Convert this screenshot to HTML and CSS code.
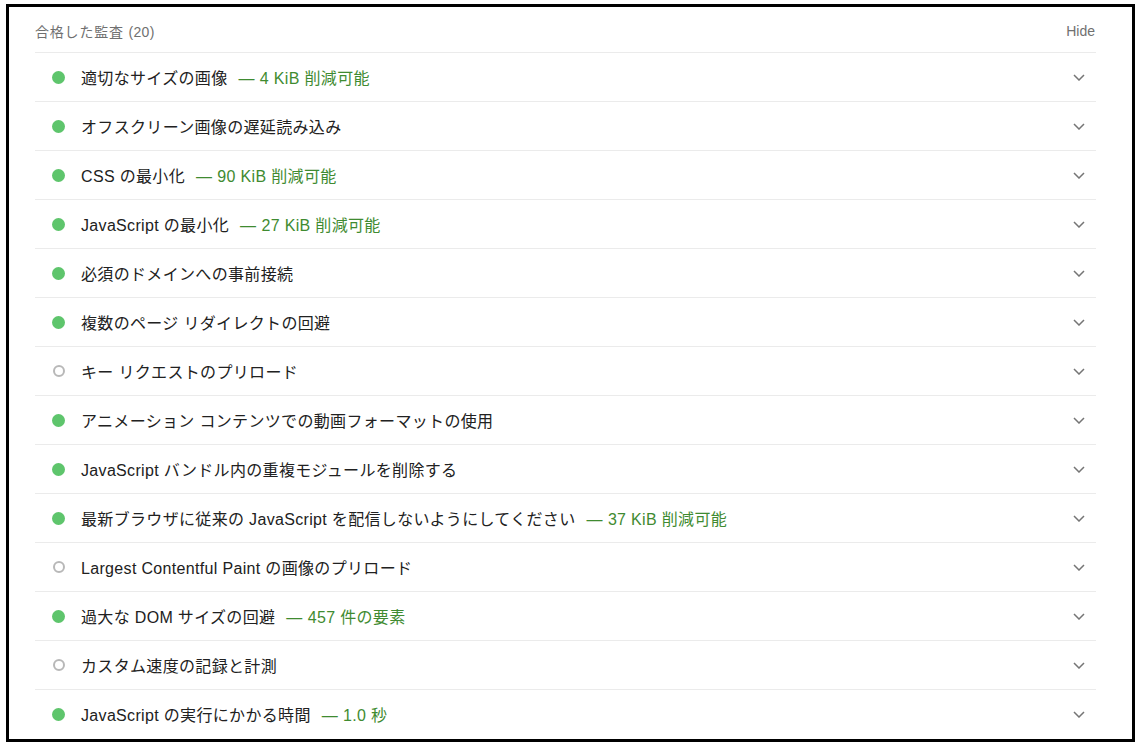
FILE: index.html
```html
<!DOCTYPE html>
<html lang="ja">
<head>
<meta charset="utf-8">
<title>合格した監査</title>
<link rel="stylesheet" href="styles.css">
</head>
<body>
<div class="frame">
  <div class="panel">
    <div class="group-head">
      <span class="group-title">合格した監査 <span class="count">(20)</span></span>
      <span class="hide">Hide</span>
    </div>
    <div class="row"><span class="dot pass"></span><span class="title">適切なサイズの画像</span><span class="value"><span class="dash">—</span>4 KiB 削減可能</span><svg class="chev" viewBox="0 0 12 7"><polyline points="1,1 6,6 11,1"/></svg></div>
    <div class="row"><span class="dot pass"></span><span class="title">オフスクリーン画像の遅延読み込み</span><svg class="chev" viewBox="0 0 12 7"><polyline points="1,1 6,6 11,1"/></svg></div>
    <div class="row"><span class="dot pass"></span><span class="title">CSS の最小化</span><span class="value"><span class="dash">—</span>90 KiB 削減可能</span><svg class="chev" viewBox="0 0 12 7"><polyline points="1,1 6,6 11,1"/></svg></div>
    <div class="row"><span class="dot pass"></span><span class="title">JavaScript の最小化</span><span class="value"><span class="dash">—</span>27 KiB 削減可能</span><svg class="chev" viewBox="0 0 12 7"><polyline points="1,1 6,6 11,1"/></svg></div>
    <div class="row"><span class="dot pass"></span><span class="title">必須のドメインへの事前接続</span><svg class="chev" viewBox="0 0 12 7"><polyline points="1,1 6,6 11,1"/></svg></div>
    <div class="row"><span class="dot pass"></span><span class="title">複数のページ リダイレクトの回避</span><svg class="chev" viewBox="0 0 12 7"><polyline points="1,1 6,6 11,1"/></svg></div>
    <div class="row"><span class="dot na"></span><span class="title">キー リクエストのプリロード</span><svg class="chev" viewBox="0 0 12 7"><polyline points="1,1 6,6 11,1"/></svg></div>
    <div class="row"><span class="dot pass"></span><span class="title">アニメーション コンテンツでの動画フォーマットの使用</span><svg class="chev" viewBox="0 0 12 7"><polyline points="1,1 6,6 11,1"/></svg></div>
    <div class="row"><span class="dot pass"></span><span class="title">JavaScript バンドル内の重複モジュールを削除する</span><svg class="chev" viewBox="0 0 12 7"><polyline points="1,1 6,6 11,1"/></svg></div>
    <div class="row"><span class="dot pass"></span><span class="title">最新ブラウザに従来の JavaScript を配信しないようにしてください</span><span class="value"><span class="dash">—</span>37 KiB 削減可能</span><svg class="chev" viewBox="0 0 12 7"><polyline points="1,1 6,6 11,1"/></svg></div>
    <div class="row"><span class="dot na"></span><span class="title">Largest Contentful Paint の画像のプリロード</span><svg class="chev" viewBox="0 0 12 7"><polyline points="1,1 6,6 11,1"/></svg></div>
    <div class="row"><span class="dot pass"></span><span class="title">過大な DOM サイズの回避</span><span class="value"><span class="dash">—</span>457 件の要素</span><svg class="chev" viewBox="0 0 12 7"><polyline points="1,1 6,6 11,1"/></svg></div>
    <div class="row"><span class="dot na"></span><span class="title">カスタム速度の記録と計測</span><svg class="chev" viewBox="0 0 12 7"><polyline points="1,1 6,6 11,1"/></svg></div>
    <div class="row"><span class="dot pass"></span><span class="title">JavaScript の実行にかかる時間</span><span class="value"><span class="dash">—</span>1.0 秒</span><svg class="chev" viewBox="0 0 12 7"><polyline points="1,1 6,6 11,1"/></svg></div>
  </div>
</div>
</body>
</html>
```

FILE: styles.css
```css
html, body {
  margin: 0;
  padding: 0;
  background: #ffffff;
}

body {
  font-family: "Liberation Sans", "Noto Sans CJK JP", sans-serif;
  color: #212121;
}

.frame {
  box-sizing: border-box;
  margin: 4px 0 0 6px;
  width: 1129px;
  height: 738px;
  border: 3px solid #000000;
  overflow: hidden;
  background: #ffffff;
}

.panel {
  padding: 0 36px 0 26px;
}

.group-head {
  box-sizing: border-box;
  height: 45px;
  padding-top: 3px;
  display: flex;
  align-items: center;
  justify-content: space-between;
  font-size: 14px;
  color: #707070;
}

.group-title {
  letter-spacing: 0.8px;
}

.count {
  letter-spacing: 0.3px;
}

.hide {
  color: #707070;
  padding-right: 1px;
}

.row {
  box-sizing: border-box;
  height: 49px;
  border-top: 1px solid #ebebeb;
  display: flex;
  align-items: center;
  font-size: 16px;
  letter-spacing: 0.33px;
  padding-left: 17px;
  padding-right: 11px;
}

.dot {
  flex: none;
  box-sizing: border-box;
  width: 13px;
  height: 13px;
  border-radius: 50%;
  margin-right: 16px;
}

.dot.pass {
  background: #5ec56c;
}

.dot.na {
  width: 12px;
  height: 12px;
  margin-left: 1px;
  border: 2px solid #b8b8b8;
  background: #ffffff;
}

.title {
  color: #212121;
  white-space: nowrap;
}

.value {
  margin-left: 11px;
  color: #3f8b31;
  white-space: nowrap;
}

.dash {
  margin-right: 5px;
}

.chev {
  margin-left: auto;
  flex: none;
  width: 12px;
  height: 7px;
  fill: none;
  stroke: #757575;
  stroke-width: 1.5;
}
```
